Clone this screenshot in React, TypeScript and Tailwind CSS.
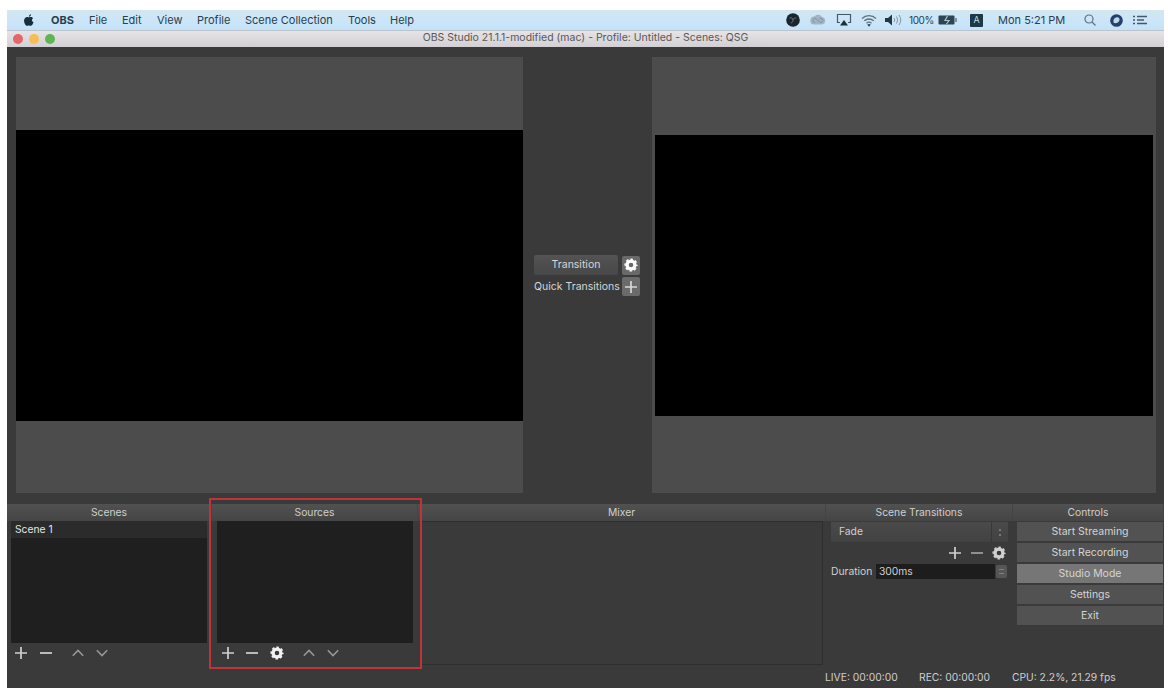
import React from 'react';
import clsx from 'clsx';

const menuItems = [
  { label: 'OBS', className: 'w-[38px] font-bold' },
  { label: 'File', className: 'w-[33px]' },
  { label: 'Edit', className: 'w-[35px]' },
  { label: 'View', className: 'w-[40px]' },
  { label: 'Profile', className: 'w-[48px]' },
  { label: 'Scene Collection', className: 'w-[103px]' },
  { label: 'Tools', className: 'w-[42px]' },
  { label: 'Help', className: 'w-[30px]' },
];

const controls = [
  { label: 'Start Streaming' },
  { label: 'Start Recording' },
  { label: 'Studio Mode', active: true },
  { label: 'Settings' },
  { label: 'Exit' },
];

interface IconProps {
  className?: string;
}

const PlusIcon = ({ className }: IconProps) => (
  <svg viewBox="0 0 14 14" className={clsx('size-[14px] shrink-0', className)} stroke="currentColor" strokeWidth="1.7" fill="none">
    <path d="M7 1v12M1 7h12" />
  </svg>
);

const MinusIcon = ({ className }: IconProps) => (
  <svg viewBox="0 0 14 14" className={clsx('size-[14px] shrink-0', className)} stroke="currentColor" strokeWidth="1.7" fill="none">
    <path d="M1 7h12" />
  </svg>
);

const ChevronIcon = ({ className }: IconProps) => (
  <svg viewBox="0 0 14 14" className={clsx('size-[14px] shrink-0', className)} stroke="currentColor" strokeWidth="1.5" fill="none">
    <path d="M1.8 9.8L7 4.4l5.2 5.4" />
  </svg>
);

const GearIcon = ({ className }: IconProps) => (
  <svg viewBox="0 0 14 14" className={clsx('size-[14px] shrink-0', className)} fill="none" stroke="currentColor">
    <circle cx="7" cy="7" r="3.9" strokeWidth="3.2" />
    <circle cx="7" cy="7" r="5.8" strokeWidth="1.6" strokeDasharray="2.5 2.055" strokeDashoffset="1.25" />
  </svg>
);

const MenuBar = () => (
  <div className="flex h-5 shrink-0 items-center bg-gradient-to-b from-[#d3e6ef] via-[#cbe6f9] to-[#c4e2f8] pl-[17px] text-[11px] text-[#26404f]">
    <svg viewBox="0 0 12 14" className="mr-[17px] h-3 w-[10px] fill-[#15303c]">
      <path d="M8.5 0c.1 1.5-1.1 3-2.6 3C5.8 1.6 7 .2 8.5 0zM10.9 4.800c-2 1.200-1.700 4 .5 4.900C10.700 11.700 9.500 14 8.100 14c-1 0-1.100-.5-2.100-.5s-1.300.5-2.200.5C1.900 14-.1 9.900.1 7.400.3 4.400 2.700 2.900 4.700 3.500c1 .4 1.300.4 2.300 0 1.500-.6 3.100-.1 3.900 1.300z" />
    </svg>
    {menuItems.map((item) => (
      <span key={item.label} className={clsx('shrink-0 whitespace-nowrap', item.className)}>
        {item.label}
      </span>
    ))}

    {/* Status icons */}
    <div className="ml-[366px] flex shrink-0 items-center">
      <svg viewBox="0 0 14 14" className="size-[14px]">
        <circle cx="7" cy="7" r="6.8" fill="#1c252b" />
        <path d="M3.500 5c2-.8 3.500.3 3.500 2M10.500 5C8.800 5 7 5.500 7 7c0 1.500-.5 2.500-2 3" fill="none" stroke="#617480" strokeWidth="1" />
      </svg>
      <svg viewBox="0 0 16 12" className="ml-[10px] h-3 w-4 fill-[#a2b5c4]">
        <path d="M4.500 10.500a4 4 0 0 1-.3-8A5 5 0 0 1 12 3a3.800 3.800 0 0 1 0 7.500z" />
        <path d="M5 8.500a2 2 0 1 1 1.500-3.300l3 2.600a2 2 0 1 0 0-3" fill="none" stroke="#7d92a2" />
      </svg>
      <svg viewBox="0 0 16 14" className="ml-[10px] h-[14px] w-4" fill="none" stroke="#425968">
        <path d="M4 9.500H1.500v-8h13v8H12" strokeWidth="1.2" />
        <path d="M8 7l4 5.500H4z" fill="#17303a" stroke="none" />
      </svg>
      <svg viewBox="0 0 16 13" className="ml-[9px] h-[13px] w-4" fill="none" stroke="#5c7280" strokeWidth="1.3">
        <path d="M1 4.500a10 10 0 0 1 14 0M3.200 6.900a7 7 0 0 1 9.600 0M5.500 9.200a4 4 0 0 1 5 0" />
        <path d="M8 12.700L6.200 10.600a3 3 0 0 1 3.600 0z" fill="#2f4653" stroke="none" />
      </svg>
      <svg viewBox="0 0 17 12" className="ml-2 h-3 w-[17px]" fill="none" stroke="#7f96a5">
        <path d="M0 4h3l4-3.500v11L3 8H0z" fill="#213944" stroke="none" />
        <path d="M9 4q1.500 2 0 4M11.500 2.500q2.500 3.500 0 7M14 1q3.500 5 0 10" />
      </svg>
      <span className="ml-[7px] w-[29px] text-[10px] tracking-[-0.4px] whitespace-nowrap">100%</span>
      <svg viewBox="0 0 19 10" className="h-[10px] w-[19px]">
        <rect x=".5" y=".5" width="16" height="9" rx="1" fill="#2b4552" />
        <path d="M17.500 3v4h1V3z" fill="#2b4552" />
        <path d="M9.500 1L7 5.500h4L8.500 9" fill="none" stroke="#abc6d5" strokeWidth="1.2" />
      </svg>
      <span className="ml-[13px] flex size-[13px] items-center justify-center rounded-[1px] bg-[#1b3947] text-[9px] text-[#c3dcea]">A</span>
      <span className="ml-[15px] w-[70px] whitespace-nowrap">Mon 5:21 PM</span>
      <svg viewBox="0 0 12 12" className="ml-4 size-3" fill="none" stroke="#5a7282" strokeWidth="1.2">
        <circle cx="5" cy="5" r="4" />
        <path d="M8 8l3.500 3.500" />
      </svg>
      <svg viewBox="0 0 14 14" className="ml-[14px] size-[13px]">
        <circle cx="7" cy="7" r="6.8" fill="#24416e" />
        <path d="M4 9.500C3 6 5 3.500 8 3.500c2.500 0 3 3.500 1 5.200C7.500 10 5.500 10.500 4 9.500z" fill="#bcd8ec" />
      </svg>
      <svg viewBox="0 0 14 10" className="ml-[10px] h-[10px] w-[14px]" stroke="#41596a" strokeWidth="1.5">
        <path d="M0 1.500h2M4 1.500h10M0 5h2M4 5h7M0 8.500h2M4 8.500h10" />
      </svg>
    </div>
  </div>
);

const TitleBar = () => (
  <div className="grid h-[17px] shrink-0 grid-cols-[1fr_auto_1fr] items-center border-t border-[#b9c4cc] bg-gradient-to-b from-[#e6e4e6] to-[#d2d0d2] pb-px">
    <div className="flex gap-[6px] pl-[6px]">
      <span className="size-[10px] rounded-full bg-[#e2666a]" />
      <span className="size-[10px] rounded-full bg-[#f4bd58]" />
      <span className="size-[10px] rounded-full bg-[#5cb653]" />
    </div>
    <span className="text-[10.5px] leading-none whitespace-nowrap text-[#5a585a]">
      OBS Studio 21.1.1-modified (mac) - Profile: Untitled - Scenes: QSG
    </span>
    <span />
  </div>
);

interface DockProps {
  title: string;
  className?: string;
  children?: React.ReactNode;
}

const Dock = ({ title, className, children }: DockProps) => (
  <section className="flex flex-col">
    <h2 className="flex h-[17px] shrink-0 items-center justify-center border-r border-[#444] bg-gradient-to-b from-[#515151] to-[#454545] text-[10.3px] text-[#cfcfcf]">
      {title}
    </h2>
    <div className={clsx('flex flex-1 flex-col', className)}>{children}</div>
  </section>
);

const Preview = () => (
  <div className="flex flex-1 pt-[10px] pl-[9px]">
    <div className="flex h-[436px] w-[507px] shrink-0 items-center bg-[#4c4c4c]">
      <div className="h-[291px] w-full bg-black" />
    </div>

    <div className="flex w-[129px] shrink-0 flex-col pt-[198px] pl-[11px] text-[10.5px] text-[#d6d6d6]">
      <div className="flex w-[106px] items-center justify-between">
        <button className="h-[20px] w-[84px] rounded-[2px] bg-gradient-to-b from-[#535353] to-[#484848]">Transition</button>
        <button className="flex h-[19px] w-[18px] items-center justify-center rounded-[2px] bg-[#696969] text-white">
          <GearIcon className="size-[13px]" />
        </button>
      </div>
      <div className="mt-[2px] flex w-[106px] items-center justify-between">
        <span className="whitespace-nowrap">Quick Transitions</span>
        <button className="flex h-[19px] w-[18px] items-center justify-center rounded-[2px] bg-[#6b6b6b] text-[#d8d8d8]">
          <PlusIcon />
        </button>
      </div>
    </div>

    <div className="flex h-[436px] w-[504px] shrink-0 items-center justify-center bg-[#4c4c4c]">
      <div className="h-[281px] w-[498px] bg-black" />
    </div>
  </div>
);

const App: React.FC = () => {
  return (
    <div className="h-[690px] w-[1168px] overflow-hidden bg-white pt-[10px] pl-[7px] font-['Inter',sans-serif]">
      <div className="relative flex h-[678px] w-[1157px] flex-col bg-[#3a3a3a]">
        <MenuBar />
        <TitleBar />
        <Preview />

        <div className="grid h-[161px] shrink-0 grid-cols-[205px_206px_408px_187px_151px]">
          <Dock title="Scenes">
            <div className="mr-[5px] ml-1 h-[122px] bg-[#1f1f1f]">
              <div className="flex h-[17px] items-center bg-[#2b2b2b] pl-1 text-[10.3px] text-[#e4e4e4]">Scene 1</div>
            </div>
            <div className="flex h-[20px] items-center pl-[7px] text-[#d0d0d0]">
              <PlusIcon />
              <MinusIcon className="ml-[11px]" />
              <ChevronIcon className="ml-[18px] text-[#999]" />
              <ChevronIcon className="ml-[10px] rotate-180 text-[#999]" />
            </div>
          </Dock>

          <Dock title="Sources">
            <div className="mr-[5px] ml-[5px] h-[122px] bg-[#1f1f1f]" />
            <div className="flex h-[20px] items-center pl-[9px] text-[#d0d0d0]">
              <PlusIcon />
              <MinusIcon className="ml-[10px]" />
              <GearIcon className="ml-[11px] text-[#f2f2f2]" />
              <ChevronIcon className="ml-[18px] text-[#999]" />
              <ChevronIcon className="ml-[10px] rotate-180 text-[#999]" />
            </div>
          </Dock>

          <Dock title="Mixer">
            <div className="mr-[3px] ml-[3px] h-full border border-[#2e2e2e]" />
          </Dock>

          <Dock title="Scene Transitions" className="pl-[5px] text-[10.3px] text-[#d0d0d0]">
            <div className="mt-px flex h-[20px] w-[177px] items-center bg-gradient-to-b from-[#4a4a4a] to-[#424242] pl-2">
              <span>Fade</span>
              <div className="ml-auto flex h-full w-[17px] flex-col items-center justify-center gap-[3px] border-l border-[#383838]">
                <span className="size-[2px] bg-[#777]" />
                <span className="size-[2px] bg-[#777]" />
              </div>
            </div>
            <div className="flex h-[22px] w-[177px] items-center justify-end gap-[8px] pr-[2px]">
              <PlusIcon />
              <MinusIcon className="text-[#a0a0a0]" />
              <GearIcon className="size-[13px]" />
            </div>
            <div className="flex h-[15px] w-[177px] items-center">
              <span className="w-[45px]">Duration</span>
              <span className="flex h-full w-[119px] items-center bg-[#1d1d1d] pl-[3px]">300ms</span>
              <span className="ml-px flex h-[13px] w-[11px] flex-col items-center justify-center gap-[3px] rounded-[2px] bg-[#565656]">
                <span className="h-px w-[5px] bg-[#808080]" />
                <span className="h-px w-[5px] bg-[#808080]" />
              </span>
            </div>
          </Dock>

          <Dock title="Controls" className="gap-[2px] pt-px pl-1">
            {controls.map((control) => (
              <button
                key={control.label}
                className={clsx(
                  'h-[19px] w-[146px] text-[10.5px] text-[#d4d4d4]',
                  control.active ? 'bg-[#767676]' : 'bg-[#525252]',
                )}
              >
                {control.label}
              </button>
            ))}
          </Dock>
        </div>

        <div className="flex h-[23px] shrink-0 items-center pt-[3px] pl-[818px] text-[10.3px] whitespace-nowrap text-[#cfcfcf]">
          <span className="w-[94px]">LIVE: 00:00:00</span>
          <span className="w-[93px]">REC: 00:00:00</span>
          <span>CPU: 2.2%, 21.29 fps</span>
        </div>

        {/* Highlight around the Sources dock */}
        <div className="absolute top-[488px] left-[202px] h-[171px] w-[213px] border-2 border-[#bd343a]" />
      </div>
    </div>
  );
};

export default App;
